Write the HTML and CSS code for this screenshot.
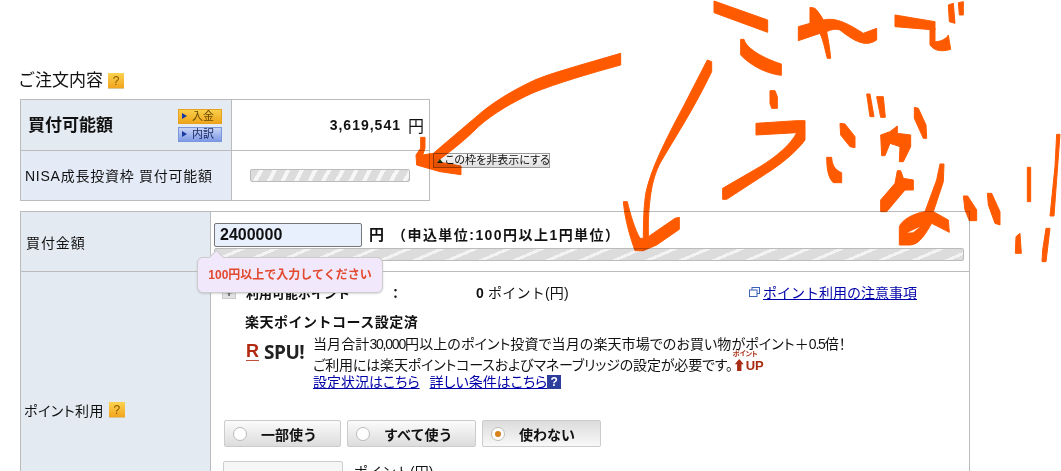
FILE: index.html
```html
<!DOCTYPE html>
<html lang="ja">
<head>
<meta charset="utf-8">
<title>ご注文内容</title>
<link rel="stylesheet" href="styles.css">
</head>
<body>
<main class="page">
  <h2 class="title">ご注文内容 <span class="help help-lg">?</span></h2>

  <section class="summary">
    <div class="cell label label-main">
      <span class="label-strong">買付可能額</span>
      <span class="mini-btns">
        <span class="mini-btn mini-gold"><i class="tri"></i>入金</span>
        <span class="mini-btn mini-blue"><i class="tri"></i>内訳</span>
      </span>
    </div>
    <div class="cell amount-cell"><span class="amount">3,619,541</span><span class="yen">円</span></div>
    <div class="cell label label-nisa">NISA成長投資枠 買付可能額</div>
    <div class="cell bar-cell"><div class="bar bar-short"></div></div>
  </section>

  <button class="hide-btn"><i class="tri-up"></i>この枠を非表示にする</button>

  <section class="order">
    <div class="order-label order-label-first">買付金額</div>
    <div class="order-body order-body-first">
      <div class="price-row">
        <div class="price-input">2400000</div>
        <span class="price-unit">円</span>
        <span class="price-note">（申込単位:100円以上1円単位）</span>
      </div>
      <div class="bar bar-long"></div>
      <div class="tooltip">100円以上で入力してください</div>
    </div>

    <div class="order-label order-label-points">ポイント利用 <span class="help help-sm">?</span></div>
    <div class="order-body points">
      <div class="point-head">
        <span class="plus">+</span>
        <span class="point-name">利用可能ポイント</span>
        <span class="point-colon">：</span>
        <span class="point-value"><b>0</b> ポイント(円)</span>
        <a class="note-link" href="#"><svg class="win-icon" viewBox="0 0 11 10"><rect x="3" y="0.5" width="7.5" height="6" fill="none" stroke="#3b62b5"/><rect x="0.5" y="3" width="7.5" height="6.5" fill="#fff" stroke="#3b62b5"/></svg>ポイント利用の注意事項</a>
      </div>
      <div class="course-title">楽天ポイントコース設定済</div>
      <div class="spu">
        <div class="spu-logo"><span class="spu-r">R</span><span class="spu-text">SPU!</span></div>
        <div class="spu-copy">
          <p class="copy-line copy-first">当月合計<span class="narrow">30,000</span>円以上のポイント投資で当月の楽天市場でのお買い物がポイント＋<span class="narrow">0.5</span>倍！</p>
          <p class="copy-line copy-second">ご利用には楽天ポイントコースおよびマネーブリッジの設定が必要です。<span class="up"><span class="up-small">ポイント</span><span class="up-big">⬆UP</span></span></p>
          <p class="copy-links"><a href="#">設定状況はこちら</a><a href="#">詳しい条件はこちら</a><span class="help-blue">?</span></p>
        </div>
      </div>
      <div class="radios">
        <label class="radio radio-a"><i class="dot"></i>一部使う</label>
        <label class="radio radio-b"><i class="dot"></i>すべて使う</label>
        <label class="radio radio-c radio-on"><i class="dot"></i>使わない</label>
      </div>
      <div class="use-row">
        <div class="use-input"></div>
        <span>ポイント(円)</span>
      </div>
    </div>
  </section>
</main>

<svg class="scribble" viewBox="0 0 1061 471" aria-hidden="true">
  <g transform="translate(400 40) scale(0.33333)">
    <path d="M662,40 C560,70 450,100 400,122 C320,160 270,195 235,225 L100,340 68,345 75,325 75,292 62,292 62,325 48,345 50,375 120,395 183,404 183,378 110,365 C150,335 190,305 235,260 C280,220 340,185 400,158 C470,130 570,100 662,75 Z"/>
  </g>
  <g transform="translate(620 0) scale(0.33333)">
    <polygon points="282,3 443,60 443,97 282,38"/>
    <path d="M362,118 L372,118 C378,145 430,175 484,192 L484,226 C440,222 390,195 362,165 Z"/>
    <path d="M535,80 L570,70 570,22 585,25 C595,35 605,50 610,60 C650,50 690,75 730,100 L770,85 770,120 C740,140 710,130 660,90 C645,85 630,90 620,95 C625,120 630,150 632,175 L622,175 C615,150 610,120 600,100 L535,122 Z"/>
    <polygon points="825,45 945,65 945,90 825,80"/>
    <path d="M930,85 L945,85 945,125 C965,125 980,115 985,105 L992,148 C970,155 945,155 930,135 Z"/>
    <polygon points="985,15 1000,10 1005,70 988,65"/>
    <polygon points="1015,8 1030,5 1030,45 1018,45"/>
    <path d="M262,180 L275,185 275,215 C220,330 160,420 120,490 C100,530 90,570 85,660 L85,710 165,655 178,652 178,688 110,735 70,752 45,752 C30,710 15,660 10,605 L22,605 C30,640 45,690 60,715 L70,715 C70,660 72,620 76,590 C85,530 120,450 190,320 Z"/>
    <polygon points="450,272 465,272 472,290 472,325 455,325 450,310"/>
    <path d="M408,370 L530,362 555,362 555,420 C530,455 480,495 440,520 L320,598 308,598 308,565 420,500 C470,470 515,430 530,398 L408,405 Z"/>
    <polygon points="660,370 675,372 705,410 705,443 690,440 662,405"/>
    <path d="M620,472 L635,472 C636,495 645,510 665,518 L665,548 L640,548 C625,535 620,505 620,472 Z"/>
    <polygon points="740,282 750,282 762,350 750,350"/>
    <polygon points="770,290 790,290 796,352 782,352"/>
    <polygon points="782,405 810,395 832,378 832,400 872,405 872,440 850,485 838,485 840,440 810,430 795,467 785,467"/>
    <polygon points="883,322 895,325 918,375 920,415 910,415 883,355"/>
    <polygon points="832,512 842,512 850,535 880,540 880,570 855,570 800,635 782,635 782,600 825,550"/>
    <path d="M960,492 L972,492 970,545 940,635 985,660 988,697 935,670 C920,695 900,735 870,735 L838,735 838,680 C845,660 880,640 915,635 L950,540 Z"/>
    <polygon class="scribble-gap" points="862,698 900,680 880,697"/>
    <polygon points="1030,588 1043,588 1070,630 1070,662 1048,662 1035,630"/>
    <polygon points="1102,580 1115,580 1140,635 1140,675 1125,670 1105,615"/>
    <polygon points="1222,502 1232,502 1232,605 1222,605"/>
    <polygon points="1188,710 1200,700 1204,760 1186,760"/>
    <polygon points="1310,403 1320,403 1302,648 1290,648 1305,500"/>
    <polygon points="1278,685 1290,685 1278,785 1266,785 1268,750"/>
  </g>
</svg>
</body>
</html>
```

FILE: styles.css
```css
* { box-sizing: border-box; }
html, body { margin: 0; height: 471px; overflow: hidden; background: #fff; }
body {
  position: relative;
  font-family: "Liberation Sans", "Noto Sans CJK JP", sans-serif;
  font-size: 14px;
  color: #111;
}
p { margin: 0; }
a { color: #0000a8; }

.page { padding: 71px 0 0 19px; }

.title {
  margin: 1px 0 9px -1px;
  height: 18px;
  display: flex;
  align-items: center;
  gap: 5px;
  font-size: 17px;
  line-height: 18px;
  font-weight: 400;
}
.help {
  display: inline-block;
  width: 16px;
  height: 16px;
  text-align: center;
  font-size: 12px;
  line-height: 16px;
  color: #8a5a00;
  background: linear-gradient(#fbd350, #f2a51e);
  border-bottom: 1px solid #d8c79a;
}
.help-sm { margin-left: 5px; }

.summary {
  margin-left: 1px;
  width: 410px;
  display: grid;
  grid-template-columns: 211px 198px;
  grid-template-rows: 51px 50px;
  border-top: 1px solid #bbb;
  border-left: 1px solid #bbb;
}
.cell { border-right: 1px solid #bbb; border-bottom: 1px solid #bbb; }
.label { display: flex; align-items: center; }
.label-main { background: #e3eaf2; padding: 0 9px 0 7px; justify-content: space-between; }
.label-nisa { background: #e4ebf7; padding: 0 0 1px 4px; letter-spacing: 0.75px; font-size: 14px; }
.label-strong { font-size: 17px; font-weight: 700; margin-bottom: 3px; }
.mini-btns { display: flex; flex-direction: column; gap: 3px; }
.mini-btn {
  width: 44px;
  height: 15px;
  display: flex;
  align-items: center;
  font-size: 11px;
  line-height: 15px;
  padding-left: 3px;
  gap: 5px;
}
.mini-gold { background: linear-gradient(#f9cf4b, #eea51b); border: 1px solid #e5a11f; color: #6b4a00; }
.mini-blue { background: linear-gradient(#c7d3f6, #7f9ae6); border: 1px solid #7a96dc; color: #1c2b66; }
.tri { width: 0; height: 0; border-left: 5px solid #1a3aa0; border-top: 3px solid transparent; border-bottom: 3px solid transparent; }
.amount-cell { display: flex; justify-content: flex-end; align-items: center; padding-right: 5px; }
.amount { font-weight: 700; letter-spacing: 1px; font-size: 14px; }
.yen { font-size: 16px; margin-left: 7px; }
.bar-cell { padding: 18px 0 0 18px; }

.bar { border: 1px solid #bbb; border-radius: 2px; }
.bar-short {
  width: 160px;
  height: 13px;
  background: repeating-linear-gradient(118deg, #dcdcdc 0 7px, #f6f6f6 7px 11px, #dcdcdc 11px 12px);
}
.bar-long {
  width: 750px;
  height: 13px;
  margin-top: 1px;
  background: repeating-linear-gradient(157deg, #dcdcdc 0 9px, #f3f3f3 9px 12px, #dcdcdc 12px 13px);
}

.hide-btn {
  position: absolute;
  left: 433px;
  top: 153px;
  width: 117px;
  height: 15px;
  padding: 0 0 0 3px;
  display: flex;
  align-items: center;
  gap: 2px;
  white-space: nowrap;
  font: 11px/13px "Liberation Sans", "Noto Sans CJK JP", sans-serif;
  font-feature-settings: "palt";
  color: #111;
  background: linear-gradient(#fafafa, #dedede);
  border: 1px solid #999;
}
.tri-up { width: 0; height: 0; border-bottom: 4px solid #143c00; border-left: 3px solid transparent; border-right: 3px solid transparent; }

.order {
  margin: 10px 0 0 1px;
  width: 950px;
  display: grid;
  grid-template-columns: 189px 760px;
  grid-template-rows: 60px 278px;
  border-top: 1px solid #bbb;
  border-left: 1px solid #bbb;
}
.order-label {
  display: flex;
  align-items: center;
  padding-left: 5px;
  background: #e3eaf2;
  border-bottom: 1px solid #bbb;
  letter-spacing: 0.9px;
  font-size: 14px;
}
.order-label-points { font-feature-settings: "palt"; letter-spacing: 0.5px; padding: 0 0 2px 3px; }
.order-body { border-left: 1px solid #bbb; border-right: 1px solid #bbb; border-bottom: 1px solid #bbb; }
.order-body-first { position: relative; padding: 11px 0 0 3px; }
.price-row { display: flex; align-items: center; height: 24px; }
.price-input {
  width: 148px;
  height: 24px;
  padding-left: 5px;
  font-size: 16px;
  line-height: 22px;
  font-weight: 700;
  background: #e8effd;
  border: 1px solid #777;
  border-radius: 2px;
}
.price-unit { margin: 0 0 3px 7px; font-size: 15px; font-weight: 700; }
.price-note { margin: 0 0 3px 8px; font-size: 14px; font-weight: 700; letter-spacing: 1.45px; white-space: nowrap; }

.tooltip {
  position: absolute;
  left: -14px;
  top: 45px;
  width: 186px;
  height: 36px;
  text-align: center;
  font-size: 12px;
  line-height: 35px;
  font-weight: 700;
  color: #e2492f;
  background: #f1e9fb;
  border: 1px solid #ccc;
  border-radius: 6px;
  box-shadow: 0 1px 2px rgba(0, 0, 0, 0.15);
  z-index: 2;
}
.tooltip::before {
  content: "";
  position: absolute;
  left: 13px;
  top: -6px;
  width: 10px;
  height: 10px;
  background: #f1e9fb;
  border-left: 1px solid #ccc;
  border-top: 1px solid #ccc;
  transform: rotate(45deg);
}

.points { padding: 12px 0 0 11px; }
.point-head { display: flex; align-items: center; height: 16px; font-weight: 700; font-size: 13px; }
.plus {
  width: 14px;
  height: 13px;
  margin-right: 10px;
  text-align: center;
  line-height: 12px;
  color: #555;
  background: #e2e2e2;
  border: 1px solid #ccc;
}
.point-name { width: 143px; }
.point-colon { width: 87px; }
.point-value { width: 273px; font-weight: 400; font-size: 14px; letter-spacing: 0.2px; }
.point-value b { font-weight: 700; }
.note-link { display: flex; align-items: center; gap: 3px; font-weight: 400; font-size: 14px; }
.win-icon { width: 11px; height: 10px; }
.course-title { margin: 13px 0 0 23px; font-size: 14px; letter-spacing: 0.5px; line-height: 18px; font-weight: 700; }
.spu { display: flex; margin: 3px 0 0 24px; }
.spu-logo { width: 67px; padding-top: 9px; display: flex; align-items: center; height: 26px; gap: 5px; }
.spu-r { color: #b12a10; font-weight: 700; font-size: 18px; border-bottom: 1px solid #c0503a; line-height: 17px; }
.spu-text { font-family: "Open Sans", sans-serif; font-weight: 700; font-size: 19px; letter-spacing: -0.5px; color: #222; }
.spu-copy { font-size: 14px; font-feature-settings: "palt"; }
.narrow { letter-spacing: -1.2px; }
.copy-line { line-height: 21px; white-space: nowrap; position: relative; }
.copy-first { letter-spacing: 0.1px; }
.copy-second { letter-spacing: -0.15px; }
.copy-links { display: flex; align-items: center; line-height: 16px; margin-top: -2px; }
.copy-links a:first-child { margin-right: 10px; }
.help-blue {
  width: 14px;
  height: 14px;
  text-align: center;
  font-size: 12px;
  line-height: 14px;
  font-weight: 700;
  color: #fff;
  background: #2c3d9c;
}
.up {
  display: inline-flex;
  flex-direction: column;
  width: 32px;
  color: #a82c12;
  font-weight: 700;
  line-height: 1;
  position: absolute;
  margin-top: -6px;
}
.up-small { font-size: 7px; line-height: 10px; }
.up-big { font-size: 13px; line-height: 13px; white-space: nowrap; }

.radios { display: flex; gap: 6px; margin: 30px 0 0 2px; }
.radio {
  height: 27px;
  display: flex;
  align-items: center;
  padding-left: 8px;
  gap: 14px;
  font-size: 14px;
  font-weight: 700;
  background: linear-gradient(#fbfbfb, #dcdcdc);
  border: 1px solid #ccc;
  border-radius: 2px;
}
.radio-a { width: 117px; }
.radio-b { width: 129px; }
.radio-c { width: 119px; }
.radio-on { background: linear-gradient(#dcdcdc, #f8f8f8); }
.dot {
  width: 14px;
  height: 14px;
  border: 1px solid #bbb;
  border-radius: 50%;
  background: #fff;
  position: relative;
}
.radio-on .dot::after {
  content: "";
  position: absolute;
  left: 3px;
  top: 3px;
  width: 6px;
  height: 6px;
  border-radius: 50%;
  background: #d8811e;
}
.use-row { display: flex; gap: 11px; margin: 14px 0 0 1px; }
.use-input { width: 120px; height: 30px; border: 1px solid #ccc; background: #f6f6f6; border-radius: 2px; }

.scribble {
  position: absolute;
  left: 0;
  top: 0;
  width: 1061px;
  height: 471px;
  fill: #ff5a00;
  stroke: #ff5a00;
  stroke-width: 3;
  stroke-linejoin: round;
  mix-blend-mode: multiply;
  z-index: 5;
  pointer-events: none;
}
.scribble-gap { fill: #fff; stroke: none; mix-blend-mode: normal; }
```
